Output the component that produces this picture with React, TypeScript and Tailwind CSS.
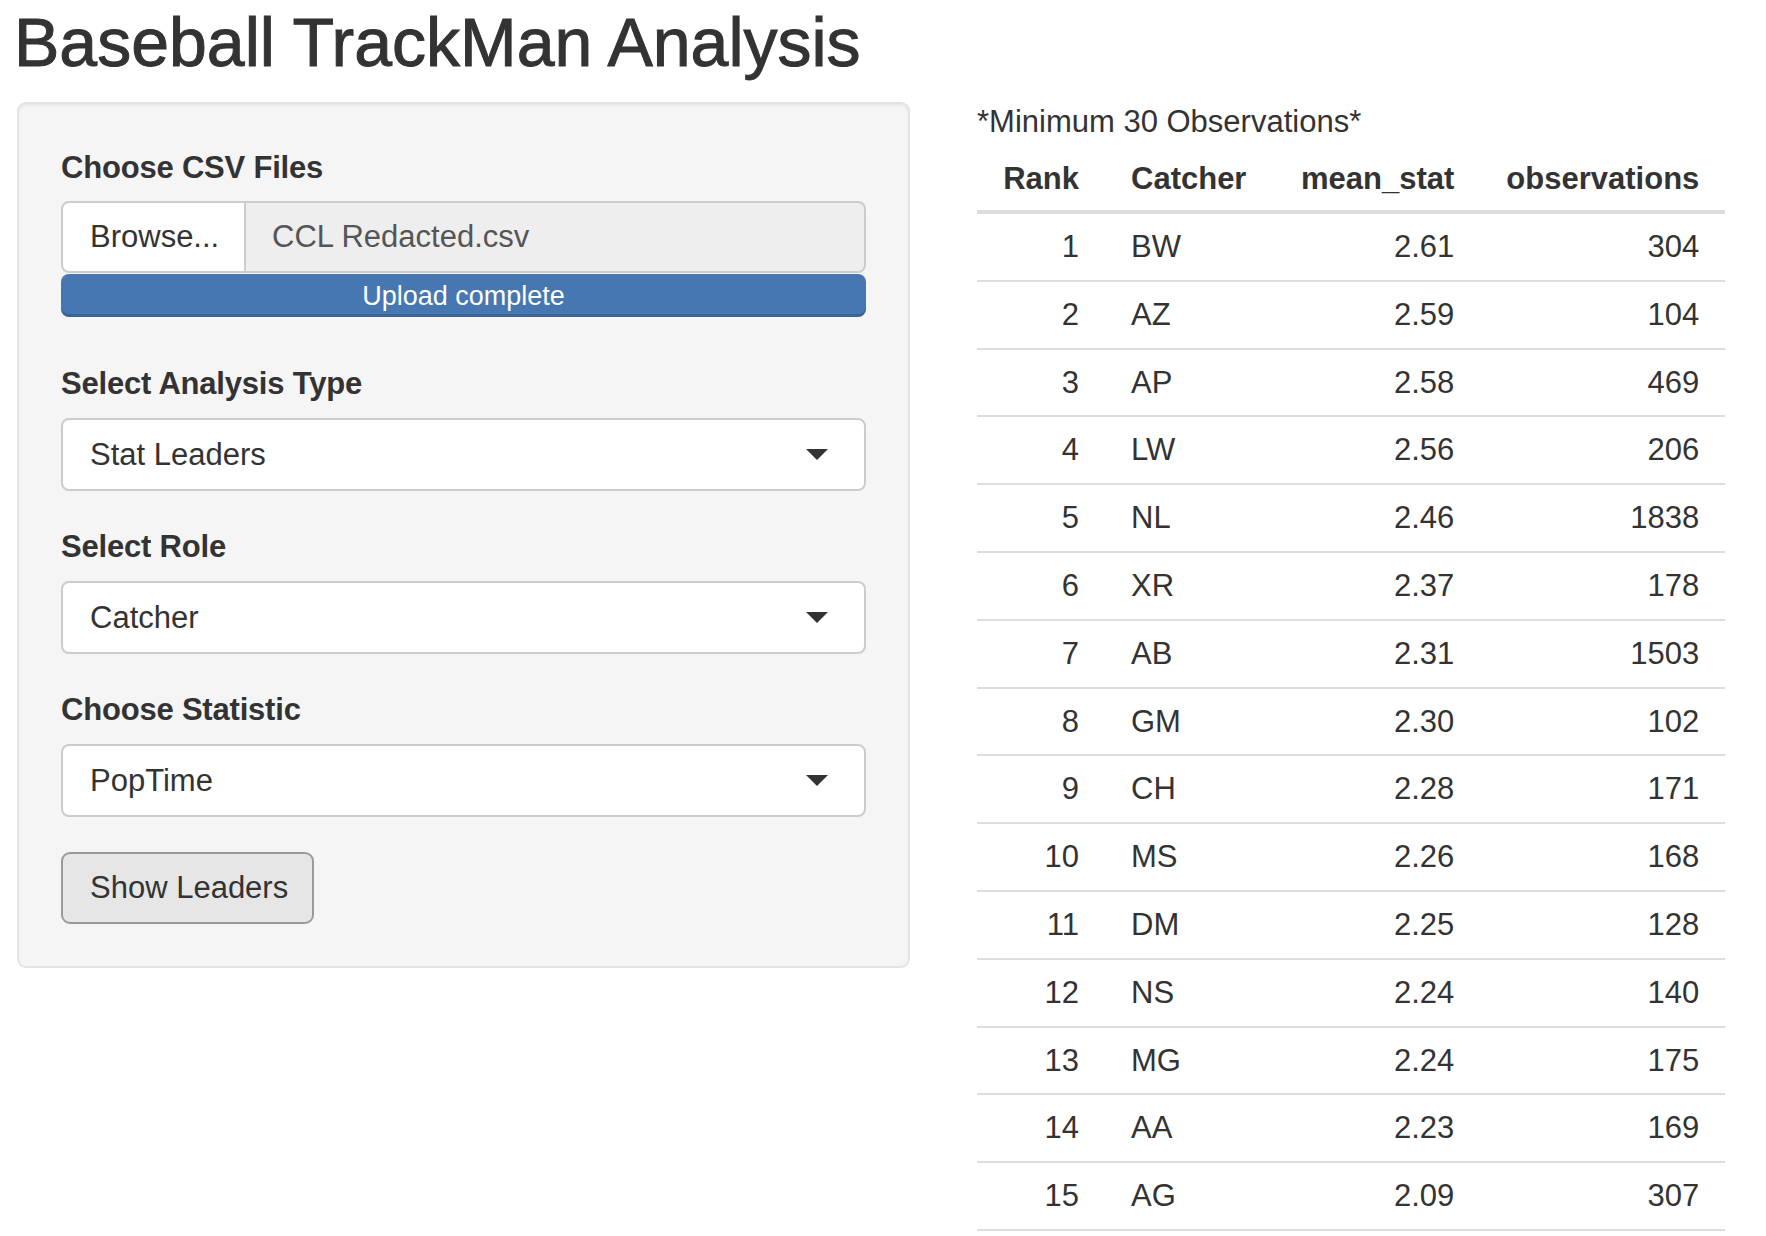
import React from 'react'

const rows = [
  { rank: 1, catcher: 'BW', mean: '2.61', obs: 304 },
  { rank: 2, catcher: 'AZ', mean: '2.59', obs: 104 },
  { rank: 3, catcher: 'AP', mean: '2.58', obs: 469 },
  { rank: 4, catcher: 'LW', mean: '2.56', obs: 206 },
  { rank: 5, catcher: 'NL', mean: '2.46', obs: 1838 },
  { rank: 6, catcher: 'XR', mean: '2.37', obs: 178 },
  { rank: 7, catcher: 'AB', mean: '2.31', obs: 1503 },
  { rank: 8, catcher: 'GM', mean: '2.30', obs: 102 },
  { rank: 9, catcher: 'CH', mean: '2.28', obs: 171 },
  { rank: 10, catcher: 'MS', mean: '2.26', obs: 168 },
  { rank: 11, catcher: 'DM', mean: '2.25', obs: 128 },
  { rank: 12, catcher: 'NS', mean: '2.24', obs: 140 },
  { rank: 13, catcher: 'MG', mean: '2.24', obs: 175 },
  { rank: 14, catcher: 'AA', mean: '2.23', obs: 169 },
  { rank: 15, catcher: 'AG', mean: '2.09', obs: 307 },
]

function Caret() {
  return (
    <svg width="22" height="11" viewBox="0 0 22 11" className="shrink-0">
      <polygon points="0,0 22,0 11,11" fill="#333333" />
    </svg>
  )
}

function SelectBox({ value }: { value: string }) {
  return (
    <div className="flex h-[73px] items-center justify-between rounded-[8px] border-2 border-[#cccccc] bg-white pl-[27px] pr-[36px] text-[#333333]">
      <span>{value}</span>
      <Caret />
    </div>
  )
}

function Label({ children }: { children: React.ReactNode }) {
  return <div className="mb-[12px] font-bold tracking-[-0.2px] text-[#333333]">{children}</div>
}

export default function App() {
  return (
    <div className="min-h-screen bg-white font-['Liberation_Sans',Arial,sans-serif] text-[31px] leading-[44px] text-[#333333]">
      <h2 className="pl-[14px] pt-[6px] text-[68px] leading-[73px] font-normal [-webkit-text-stroke:1px_#333333]">
        Baseball TrackMan Analysis
      </h2>

      <div className="mt-[21px] flex items-start pl-[17px]">
        {/* sidebar */}
        <div className="mt-[2px] w-[893px] rounded-[9px] border-2 border-[#e3e3e3] bg-[#f5f5f5] p-[42px] shadow-[inset_0_2px_2px_rgba(0,0,0,0.05)]">
          <div className="font-bold tracking-[-0.2px] mb-[11px]">Choose CSV Files</div>
          <div className="flex h-[72px]">
            <div className="flex w-[185px] items-center rounded-l-[8px] border-2 border-[#cccccc] bg-white pl-[27px]">
              Browse...
            </div>
            <div className="flex flex-1 items-center rounded-r-[8px] border-2 border-l-0 border-[#cccccc] bg-[#eeeeee] pl-[26px] text-[#555555]">
              CCL Redacted.csv
            </div>
          </div>
          <div className="mt-[1px] flex h-[43px] items-center justify-center rounded-[8px] bg-[#4677b1] text-[27px] text-white shadow-[inset_0_-3px_0_rgba(0,0,0,0.15)]">
            Upload complete
          </div>

          <div className="mt-[45px]">
            <Label>Select Analysis Type</Label>
            <SelectBox value="Stat Leaders" />
          </div>
          <div className="mt-[34px]">
            <Label>Select Role</Label>
            <SelectBox value="Catcher" />
          </div>
          <div className="mt-[34px]">
            <Label>Choose Statistic</Label>
            <SelectBox value="PopTime" />
          </div>

          <button className="mt-[35px] flex h-[72px] w-[253px] items-center rounded-[9px] border-2 border-[#9a9a9a] bg-[#e6e6e6] pl-[27px] text-[#333333]">
            Show Leaders
          </button>
        </div>

        {/* results */}
        <div className="ml-[67px]">
          <div>*Minimum 30 Observations*</div>
          <table className="border-collapse">
            <thead>
              <tr className="border-b-4 border-[#dddddd]">
                <th className="w-[128px] px-[26px] pt-[13px] pb-[9px] text-right font-bold">Rank</th>
                <th className="w-[170px] px-[26px] pt-[13px] pb-[9px] text-left font-bold">Catcher</th>
                <th className="w-[205px] px-[26px] pt-[13px] pb-[9px] text-right font-bold">mean_stat</th>
                <th className="w-[243px] px-[26px] pt-[13px] pb-[9px] text-right font-bold">observations</th>
              </tr>
            </thead>
            <tbody>
              {rows.map(r => (
                <tr key={r.rank} className="border-b-2 border-[#dddddd]">
                  <td className="px-[26px] py-[11px] text-right leading-[43.8px]">{r.rank}</td>
                  <td className="px-[26px] py-[11px] text-left leading-[43.8px]">{r.catcher}</td>
                  <td className="px-[26px] py-[11px] text-right leading-[43.8px]">{r.mean}</td>
                  <td className="px-[26px] py-[11px] text-right leading-[43.8px]">{r.obs}</td>
                </tr>
              ))}
            </tbody>
          </table>
        </div>
      </div>
    </div>
  )
}
